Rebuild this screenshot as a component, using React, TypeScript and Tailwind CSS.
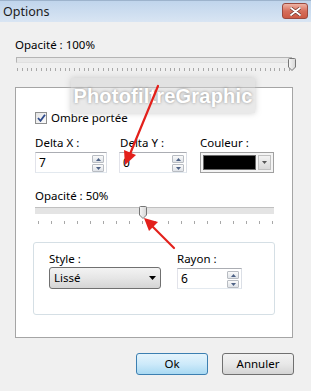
import React from "react";

const font = { fontFamily: '"Noto Sans", "Open Sans", sans-serif' };

function Ticks({ count, className }: { count: number; className: string }) {
  return (
    <div className={`flex justify-between ${className}`}>
      {Array.from({ length: count }).map((_, i) => (
        <span key={i} className="block h-[3px] w-px bg-[#a8a8a8]" />
      ))}
    </div>
  );
}

function Thumb({ left, top }: { left: number; top: number }) {
  return (
    <svg
      width="8"
      height="13"
      viewBox="0 0 8 13"
      className="absolute"
      style={{ left, top }}
    >
      <defs>
        <linearGradient id="thumbG" x1="0" y1="0" x2="1" y2="0">
          <stop offset="0" stopColor="#f6f6f6" />
          <stop offset="1" stopColor="#d6d6d6" />
        </linearGradient>
      </defs>
      <path
        d="M1.5 0.5 H6.5 Q7.5 0.5 7.5 1.5 V9 L4 12.5 L0.5 9 V1.5 Q0.5 0.5 1.5 0.5 Z"
        fill="url(#thumbG)"
        stroke="#767676"
      />
    </svg>
  );
}

function Spin() {
  return (
    <div className="absolute right-[2px] top-[2px] flex flex-col gap-px">
      {[0, 1].map((i) => (
        <div
          key={i}
          className="flex h-[8px] w-[12px] items-center justify-center rounded-[1px] border border-[#b8bcc2] bg-gradient-to-b from-[#fafafa] to-[#dfe3e8]"
        >
          <svg width="5" height="3" viewBox="0 0 5 3">
            <path d={i === 0 ? "M0 3 L2.5 0 L5 3 Z" : "M0 0 L2.5 3 L5 0 Z"} fill="#4d6185" />
          </svg>
        </div>
      ))}
    </div>
  );
}

function SpinInput({ value, width }: { value: string; width: number }) {
  return (
    <div
      className="relative mt-px h-[21px] border border-[#abadb3] border-b-[#e3e9ef] border-l-[#e2e3ea] border-r-[#dbdfe6] bg-white"
      style={{ width }}
    >
      <span className="absolute left-[3px] top-[1px] text-[12px] leading-[17px]">{value}</span>
      <Spin />
    </div>
  );
}

export default function App() {
  return (
    <div
      className="relative h-[391px] w-[311px] overflow-hidden bg-[#f0f0f0] text-[11.5px] leading-4 text-black"
      style={font}
    >
      {/* title bar */}
      <div className="relative flex h-[22px] items-center border-t border-[#9db3cc] bg-gradient-to-b from-[#c0d5ec] to-[#d9e5f3] pl-[3px]">
        <span className="text-[12.5px] text-[#1c1c1c]">Options</span>
        <div className="absolute right-[3px] top-[2px] flex h-[16px] w-[26px] items-center justify-center rounded-[3px] border border-[#9a4a40] bg-gradient-to-b from-[#eeb4a6] via-[#d66e5c] to-[#cc5a44]">
          <svg width="11" height="9" viewBox="0 0 11 9">
            <path d="M1 1 L10 8 M10 1 L1 8" stroke="#6a3028" strokeWidth="3.2" strokeLinecap="round" />
            <path d="M1 1 L10 8 M10 1 L1 8" stroke="#ffffff" strokeWidth="1.8" strokeLinecap="round" />
          </svg>
        </div>
      </div>

      <div className="pl-[15px]">
        <div className="mt-[15px] h-4">Opacité : 100%</div>
        <div className="relative w-[277px]">
          <div className="ml-px mt-[4px] h-[6px] w-[276px] border border-[#b4b4b4] border-b-[#e0e0e0] bg-[#e8e8e8]" />
          <Thumb left={273} top={1} />
          <Ticks count={58} className="ml-[2px] mt-[5px] w-[273px]" />
        </div>

        {/* main panel */}
        <div className="mt-[16px] h-[251px] w-[278px] border border-[#a5a5a5] bg-white pl-[19px] pt-[23px]">
          <div className="flex h-[13px] items-center gap-[4px]">
            <div className="flex h-[12px] w-[12px] items-center justify-center border border-[#8e8f8f] bg-gradient-to-br from-[#e4e4e4] to-[#fbfbfb]">
              <svg width="9" height="8" viewBox="0 0 9 8">
                <path d="M1 4 L3.5 6.8 L8 0.8" stroke="#2f4b8c" strokeWidth="1.8" fill="none" />
              </svg>
            </div>
            <span>Ombre portée</span>
          </div>

          <div className="mt-[11px] flex">
            <div className="w-[72px]">
              <div className="h-4">Delta X :</div>
              <SpinInput value="7" width={72} />
            </div>
            <div className="ml-[12px] w-[68px]">
              <div className="h-4 pl-px">Delta Y :</div>
              <SpinInput value="0" width={68} />
            </div>
            <div className="ml-[13px] w-[74px]">
              <div className="h-4">Couleur :</div>
              <div className="mt-px flex h-[21px] w-[74px] items-center gap-[2px] border border-[#a0a0a0] bg-[#f4f4f4] px-[2px]">
                <div className="h-[15px] w-[53px] border border-[#6a6a6a] bg-black" />
                <div className="flex h-[15px] w-[13px] items-center justify-center border border-[#c0c0c0] bg-gradient-to-b from-[#f2f2f2] to-[#d8d8d8]">
                  <svg width="5" height="3" viewBox="0 0 5 3">
                    <path d="M0 0 L2.5 3 L5 0 Z" fill="#555" />
                  </svg>
                </div>
              </div>
            </div>
          </div>

          <div className="mt-[15px] h-4">Opacité : 50%</div>
          <div className="relative w-[240px]">
            <div className="mt-[3px] h-[7px] w-[239px] border-t border-[#c0c0c0] bg-[#e4e4e4]" />
            <Thumb left={104} top={-1} />
            <Ticks count={19} className="ml-[3px] mt-[7px] w-[235px]" />
          </div>

          {/* inner group */}
          <div className="-ml-[2px] mt-[18px] h-[73px] w-[242px] rounded-[3px] border border-[#d5dfe5] pl-[15px] pt-[8px]">
            <div className="flex">
              <div className="w-[112px]">
                <div className="h-4">Style :</div>
                <div className="flex h-[22px] items-center justify-between rounded-[3px] border border-[#707070] bg-gradient-to-b from-[#f3f3f3] via-[#e6e6e6] to-[#d5d5d5] pl-[4px] pr-[4px]">
                  <span>Lissé</span>
                  <svg width="7" height="4" viewBox="0 0 7 4">
                    <path d="M0 0 L3.5 4 L7 0 Z" fill="#000" />
                  </svg>
                </div>
              </div>
              <div className="ml-[16px] w-[65px]">
                <div className="h-4">Rayon :</div>
                <SpinInput value="6" width={65} />
              </div>
            </div>
          </div>
        </div>

        <div className="mt-[15px] flex w-[279px] justify-end gap-[14px]">
          <div className="flex h-[22px] w-[72px] items-center justify-center rounded-[3px] border border-[#3c7fb1] bg-gradient-to-b from-[#e5f4fc] via-[#cdeafa] to-[#a9d9f2]">
            Ok
          </div>
          <div className="flex h-[22px] w-[72px] items-center justify-center rounded-[3px] border border-[#707070] bg-gradient-to-b from-[#f2f2f2] via-[#e8e8e8] to-[#d4d4d4]">
            Annuler
          </div>
        </div>
      </div>

      {/* watermark */}
      <div className="absolute left-[71px] top-[78px] flex h-[35px] w-[184px] items-center justify-center bg-[#d4d4d4]/50 shadow-[0_0_6px_rgba(190,190,190,0.8)]">
        <span
          className="text-[20px] font-bold tracking-[0.2px] text-white"
          style={{ fontFamily: '"Liberation Sans", Arial, sans-serif', textShadow: "0 0 3px rgba(120,120,120,0.8)" }}
        >
          PhotofiltreGraphic
        </span>
      </div>

      {/* red arrows */}
      <svg className="pointer-events-none absolute left-0 top-0" width="311" height="391">
        <g stroke="#e3201b" strokeWidth="2.2" fill="#e3201b" strokeLinecap="round">
          <line x1="158" y1="86" x2="130" y2="154" />
          <path d="M125 165 L124 150 L136 155 Z" stroke="none" />
          <line x1="174" y1="248" x2="152" y2="226" />
          <path d="M144 218 L158 222 L149 231 Z" stroke="none" />
        </g>
      </svg>
    </div>
  );
}
